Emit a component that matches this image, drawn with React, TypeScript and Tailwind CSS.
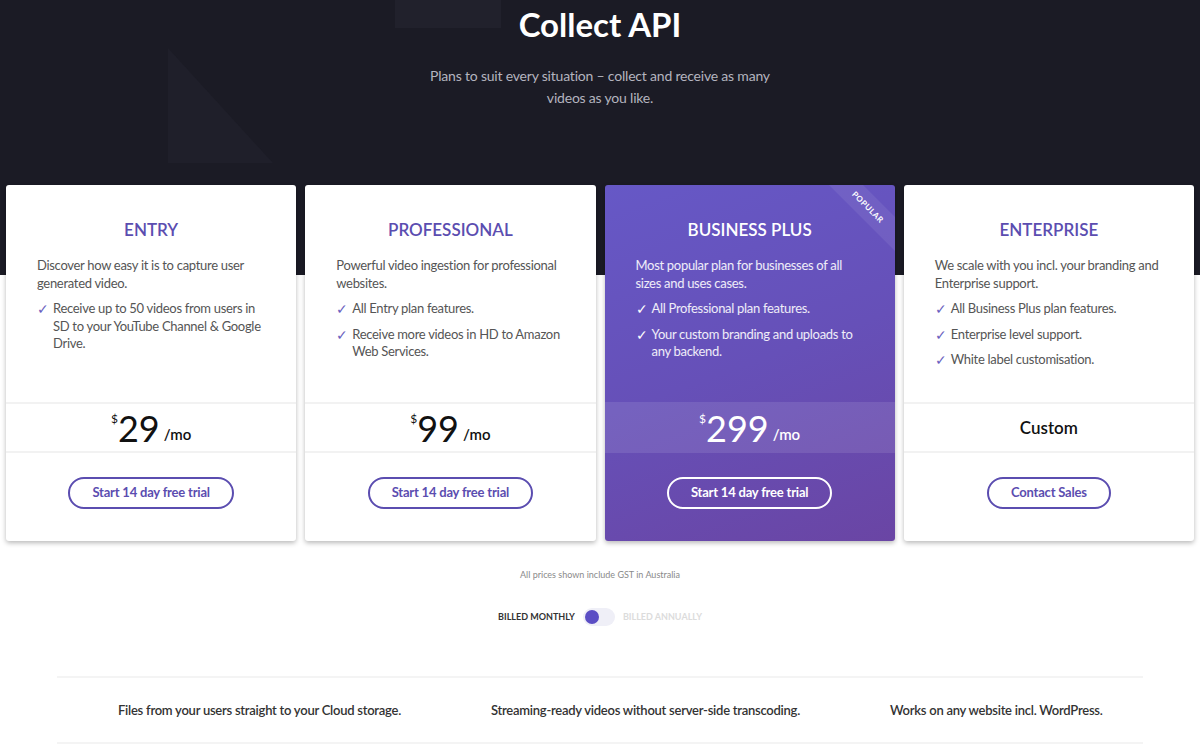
import React from "react";

interface Plan {
  name: string;
  description: string;
  features: string[];
  price?: string;
  cta: string;
  featured?: boolean;
}

const plans: Plan[] = [
  {
    name: "ENTRY",
    description: "Discover how easy it is to capture user generated video.",
    features: ["Receive up to 50 videos from users in SD to your YouTube Channel & Google Drive."],
    price: "29",
    cta: "Start 14 day free trial",
  },
  {
    name: "PROFESSIONAL",
    description: "Powerful video ingestion for professional websites.",
    features: ["All Entry plan features.", "Receive more videos in HD to Amazon Web Services."],
    price: "99",
    cta: "Start 14 day free trial",
  },
  {
    name: "BUSINESS PLUS",
    description: "Most popular plan for businesses of all sizes and uses cases.",
    features: ["All Professional plan features.", "Your custom branding and uploads to any backend."],
    price: "299",
    cta: "Start 14 day free trial",
    featured: true,
  },
  {
    name: "ENTERPRISE",
    description: "We scale with you incl. your branding and Enterprise support.",
    features: ["All Business Plus plan features.", "Enterprise level support.", "White label customisation."],
    cta: "Contact Sales",
  },
];

const highlights = [
  "Files from your users straight to your Cloud storage.",
  "Streaming-ready videos without server-side transcoding.",
  "Works on any website incl. WordPress.",
];

const PlanCard = ({ plan }: { plan: Plan }) => {
  const f = plan.featured;
  return (
    <div
      className={`relative flex flex-col overflow-hidden rounded-[3px] shadow-[0_2px_5px_rgba(0,0,0,0.28)] ${
        f ? "bg-[linear-gradient(160deg,#6658c6_0%,#6650b8_50%,#6a45a4_100%)] text-white" : "bg-white text-[#555]"
      }`}
    >
      {f && (
        <div className="absolute right-[-38px] top-[10px] w-[130px] rotate-45 bg-white/[0.07] py-[6px] text-center text-[8px] font-bold tracking-[0.5px] text-white">
          POPULAR
        </div>
      )}
      <div className="h-[217px] px-[31px] pt-[35px] tracking-[-0.3px]">
        <h3
          className={`text-center text-[17px] font-semibold leading-5 tracking-normal ${f ? "text-white" : "text-[#5b4db0]"}`}
        >
          {plan.name}
        </h3>
        <p className={`mt-[17px] text-[13px] leading-[17.5px] ${f ? "text-white/90" : "text-[#555]"}`}>
          {plan.description}
        </p>
        <ul className="mt-[8px] space-y-[8px]">
          {plan.features.map((feat) => (
            <li key={feat} className={`flex text-[13px] leading-[17.5px] ${f ? "text-white/90" : "text-[#555]"}`}>
              <span className={`w-[16px] shrink-0 text-[14px] ${f ? "text-white" : "text-[#6a5fc0]"}`}>✓</span>
              <span>{feat}</span>
            </li>
          ))}
        </ul>
      </div>
      <div
        className={`flex h-[51px] items-center justify-center border-y-2 ${
          f ? "border-transparent bg-white/10" : "border-[#f2f2f2]"
        }`}
      >
        {plan.price ? (
          <div className={`flex items-end ${f ? "text-white" : "text-[#111]"}`}>
            <span className="self-start pt-[4px] text-[12px] leading-none">$</span>
            <span className="text-[36px] font-normal leading-[38px]">{plan.price}</span>
            <span className="mb-[5px] ml-[4px] text-[15px] font-semibold leading-none">/mo</span>
          </div>
        ) : (
          <span className="text-[17px] font-semibold text-[#111]">Custom</span>
        )}
      </div>
      <div className="flex flex-1 items-start justify-center pt-[24px] pb-[32px]">
        <button
          className={`h-[32px] rounded-full border-2 px-[22px] text-[13px] font-bold tracking-[-0.2px] ${
            f ? "border-white text-white" : "border-[#5b4db0] text-[#5b4db0]"
          }`}
        >
          {plan.cta}
        </button>
      </div>
    </div>
  );
};

export default function App() {
  return (
    <div className="min-h-[747px] bg-white font-['Lato','Noto_Sans',sans-serif]">
      <header className="relative h-[275px] overflow-hidden bg-[#1b1b25] text-center">
        <svg className="pointer-events-none absolute left-0 top-0" width="600" height="200" aria-hidden>
          <rect x="395" y="0" width="106" height="28" fill="#21212c" />
          <polygon points="168,48 168,163 273,163" fill="#1f1f2a" />
        </svg>
        <div className="relative">
          <h1 className="pt-[3px] text-[33px] font-bold leading-[42px] text-white">Collect API</h1>
          <p className="mx-auto mt-[20px] w-[370px] text-[14px] leading-[22px] tracking-[-0.2px] text-[#b4b4bf]">
            Plans to suit every situation – collect and receive as many videos as you like.
          </p>
        </div>
      </header>

      <div className="relative -mt-[90px] grid grid-cols-4 gap-[9px] px-[6px]">
        {plans.map((p) => (
          <PlanCard key={p.name} plan={p} />
        ))}
      </div>

      <p className="mt-[27px] text-center text-[9px] text-[#8a8a8a]">All prices shown include GST in Australia</p>

      <div className="mt-[26px] flex items-center justify-center gap-[8px] text-[9px] font-bold">
        <span className="text-[#333]">BILLED MONTHLY</span>
        <span className="flex h-[18px] w-[32px] items-center rounded-full bg-[#efeff7] px-[2px]">
          <span className="h-[14px] w-[14px] rounded-full bg-[#5b4ec4]" />
        </span>
        <span className="text-[#dcdcdc]">BILLED ANNUALLY</span>
      </div>

      <div className="mx-[57px] mt-[50px] flex h-[68px] items-center gap-[90px] border-y-2 border-[#f4f4f4] pl-[61px] pt-[3px] text-[13px] font-semibold tracking-[-0.25px] text-[#333]">
        {highlights.map((h) => (
          <span key={h}>{h}</span>
        ))}
      </div>
    </div>
  );
}
